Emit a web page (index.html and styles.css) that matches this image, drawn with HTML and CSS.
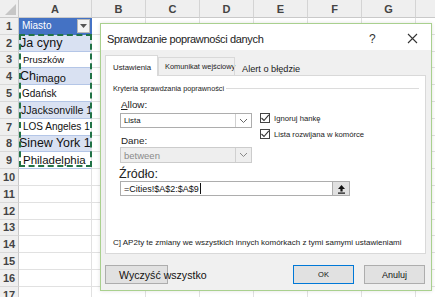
FILE: index.html
```html
<!DOCTYPE html>
<html lang="pl">
<head>
    <meta charset="UTF-8">
    <meta name="viewport" content="width=device-width, initial-scale=1.0">
    <title>Sprawdzanie poprawności danych</title>
    <link rel="stylesheet" href="styles.css">
</head>
<body>
    <div class="sheet" id="sheet">
        <div class="corner"><span class="corner-tri"></span></div>
        <div class="col-head">A</div>
        <div class="col-head">B</div>
        <div class="col-head">C</div>
        <div class="col-head">D</div>
        <div class="col-head">E</div>
        <div class="col-head">F</div>
        <div class="col-head">G</div>
        <div class="col-head"></div>
        <div class="copy-range"></div>
    </div>

    <div class="dialog">
        <div class="titlebar">
            <span class="title">Sprawdzanie poprawności danych</span>
            <span class="help">?</span>
            <svg class="close" width="11" height="11" viewBox="0 0 11 11">
                <path d="M1 1 L10 10 M10 1 L1 10" stroke="#333" stroke-width="1.1" fill="none"/>
            </svg>
        </div>
        <div class="dlg-body">
            <div class="tabs">
                <div class="tab tab-active">Ustawienia</div>
                <div class="tab">Komunikat wejściowy</div>
                <div class="tab tab-alert">Alert o błędzie</div>
            </div>
            <div class="panel">
                <div class="group-title"><span>Kryteria sprawdzania poprawności</span><span class="rule"></span></div>
                <div class="criteria">
                    <div class="fields">
                        <div class="lbl"><u>A</u>llow:</div>
                        <div class="select">
                            <span class="select-text">Lista</span>
                            <span class="drop"><svg width="9" height="6" viewBox="0 0 9 6"><path d="M1 1 L4.5 4.5 L8 1" stroke="#666" stroke-width="1" fill="none"/></svg></span>
                        </div>
                        <div class="lbl lbl-gap">Dane:</div>
                        <div class="select select-off">
                            <span class="select-text">between</span>
                            <span class="drop"><svg width="9" height="6" viewBox="0 0 9 6"><path d="M1 1 L4.5 4.5 L8 1" stroke="#888" stroke-width="1" fill="none"/></svg></span>
                        </div>
                    </div>
                    <div class="checks">
                        <div class="check">
                            <span class="box"><svg width="10" height="10" viewBox="0 0 10 10"><path d="M1.5 5 L4 7.5 L8.8 1.8" stroke="#333" stroke-width="1.1" fill="none"/></svg></span>
                            <span>Ignoruj hankę</span>
                        </div>
                        <div class="check">
                            <span class="box"><svg width="10" height="10" viewBox="0 0 10 10"><path d="M1.5 5 L4 7.5 L8.8 1.8" stroke="#333" stroke-width="1.1" fill="none"/></svg></span>
                            <span>Lista rozwijana w komórce</span>
                        </div>
                    </div>
                </div>
                <div class="lbl lbl-big">Źródło:</div>
                <div class="source">
                    <div class="src-input">=Cities!$A$2:$A$9<span class="caret"></span></div>
                    <div class="collapse">
                        <svg width="9" height="10" viewBox="0 0 9 10"><path d="M4.5 1 L8 5 L5.6 5 L5.6 7.5 L3.4 7.5 L3.4 5 L1 5 Z" fill="#111"/><rect x="1" y="8.5" width="7" height="1.2" fill="#111"/></svg>
                    </div>
                </div>
                <div class="apply">C] AP2ty te zmiany we wszystkich innych komórkach z tymi samymi ustawieniami</div>
            </div>
            <div class="buttons">
                <div class="btn btn-clear">Wyczyść wszystko</div>
                <div class="btn btn-ok">OK</div>
                <div class="btn btn-cancel">Anuluj</div>
            </div>
        </div>
    </div>

    <script>
        // wiersze arkusza: numer, kolumna A, reszta pustych komórek
        const cities = [
            '<span class="hdr-text">Miasto</span><span class="filter"><svg width="7" height="4" viewBox="0 0 7 4"><path d="M0 0 L7 0 L3.5 4 Z" fill="#555"/></svg></span>',
            '<span class="t-big">Ja cyny</span>',
            '<span class="t-sm">Pruszków</span>',
            '<span class="t-big">Ch</span><span class="t-hl">imago</span>',
            '<span class="t-gd">Gdańsk</span>',
            '<span class="t-jx">JJacksonville 1</span>',
            '<span class="t-la">LOS Angeles 1</span>',
            '<span class="t-ny">Sinew York 1</span>',
            '<span class="t-ph">Philadelphia</span>'
        ];

        const sheet = document.getElementById("sheet");
        for (let r = 1; r <= 17; r++) {
            const row = r + 1; // linia siatki (pierwsza to nagłówek kolumn)

            const num = document.createElement("div");
            num.className = "row-num";
            num.innerText = r;
            num.style.gridRow = row;
            sheet.appendChild(num);

            const a = document.createElement("div");
            a.className = "cell cell-a";
            if (r === 1) a.classList.add("cell-head");
            else if (r <= 9 && r % 2 === 0) a.classList.add("band");
            else if (r <= 9) a.classList.add("plain");
            a.innerHTML = cities[r - 1] || "";
            a.style.gridRow = row;
            sheet.appendChild(a);

            for (let c = 0; c < 7; c++) {
                const cell = document.createElement("div");
                cell.className = "cell";
                cell.style.gridRow = row;
                sheet.appendChild(cell);
            }
        }
    </script>
</body>
</html>
```

FILE: styles.css
```css
body {
    margin: 0;
    width: 435px;
    height: 297px;
    overflow: hidden;
    position: relative;
    background: #fff;
    font-family: "Liberation Sans", Arial, sans-serif;
    color: #111;
}

/* arkusz */
.sheet {
    width: 435px;
    height: 297px;
    overflow: hidden;
    display: grid;
    grid-template-columns: 19px 73px repeat(7, 54px);
    grid-template-rows: 18px;
    grid-auto-rows: 16.8px;
}

.corner {
    background: #efefef;
    border-right: 1px solid #c9c9c9;
    border-bottom: 1px solid #c9c9c9;
    box-sizing: border-box;
    display: flex;
    align-items: flex-end;
    justify-content: flex-end;
    padding: 0 2px 2px 0;
}

.corner-tri {
    width: 0;
    height: 0;
    border-left: 11px solid transparent;
    border-bottom: 11px solid #c6c6c6;
}

.col-head {
    background: #efefef;
    border-right: 1px solid #d4d4d4;
    border-bottom: 1px solid #c9c9c9;
    box-sizing: border-box;
    display: flex;
    align-items: center;
    justify-content: center;
    font-size: 11px;
    font-weight: bold;
    color: #444;
}

.row-num {
    grid-column: 1;
    background: #efefef;
    border-right: 1px solid #c9c9c9;
    border-bottom: 1px solid #d9d9d9;
    box-sizing: border-box;
    display: flex;
    align-items: center;
    justify-content: center;
    font-size: 11px;
    font-weight: bold;
    color: #444;
}

.cell {
    border-right: 1px solid #e1e1e1;
    border-bottom: 1px solid #e1e1e1;
    box-sizing: border-box;
    white-space: nowrap;
    display: flex;
    align-items: center;
    min-width: 0;
}

.cell-a {
    grid-column: 2;
    overflow: visible;
}

.cell-head {
    background: #4472c4;
    border-color: #4472c4;
    color: #fff;
    font-size: 10px;
    padding-left: 3px;
}

.band {
    background: #d9e1f2;
    border-bottom-color: #b4c6e7;
}

.plain {
    border-bottom-color: #b4c6e7;
}

.filter {
    margin-left: auto;
    margin-right: 1px;
    width: 13px;
    height: 14px;
    box-sizing: border-box;
    background: #f3f3f3;
    border: 1px solid #b7b7b7;
    display: flex;
    align-items: center;
    justify-content: center;
}

/* teksty miast mają różne rozmiary */
.t-big { font-size: 12.5px; margin-left: 1px; }
.t-sm { font-size: 9.5px; margin-left: 4px; }
.t-gd { font-size: 10px; margin-left: 3px; }
.t-jx { font-size: 10.6px; margin-left: 2px; }
.t-la { font-size: 10px; margin-left: 4px; }
.t-ny { font-size: 12.4px; margin-left: 0; }
.t-ph { font-size: 11.5px; margin-left: 4px; }
.t-hl {
    font-size: 11px;
    background: #d9e1f2;
    padding-top: 4px;
    align-self: flex-end;
}

.copy-range {
    grid-column: 2;
    grid-row: 3 / 11;
    border: 2px dashed #217346;
    margin: -1px 0 2px 0;
    z-index: 1;
}

/* okno dialogowe */
.dialog {
    position: absolute;
    left: 100px;
    top: 23px;
    width: 332px;
    height: 268px;
    box-sizing: border-box;
    border: 1px solid #a9d08e;
    background: #f0f0f0;
    box-shadow: 0 0 4px rgba(0, 0, 0, 0.12);
    display: flex;
    flex-direction: column;
    z-index: 5;
}

.titlebar {
    height: 26px;
    background: #fff;
    display: flex;
    align-items: center;
    padding: 3px 0 0 6px;
    box-sizing: border-box;
}

.title {
    font-size: 11px;
    letter-spacing: -0.35px;
    color: #222;
}

.help {
    margin-left: auto;
    font-size: 12px;
    color: #333;
    width: 10px;
}

.close {
    margin: 0 13px 0 28px;
}

.dlg-body {
    padding: 5px 5px 5px 4px;
}

.tabs {
    display: flex;
    align-items: flex-end;
    height: 20px;
}

.tab {
    height: 18px;
    box-sizing: border-box;
    border: 1px solid #d9d9d9;
    border-bottom: none;
    font-size: 7.4px;
    color: #222;
    display: flex;
    align-items: center;
    padding: 0 6px;
    width: 77px;
    white-space: nowrap;
}

.tab-active {
    height: 21px;
    width: 53px;
    margin-bottom: -1px;
    background: #fff;
    position: relative;
    z-index: 1;
    font-size: 7.8px;
    padding-left: 7px;
    padding-top: 3px;
}

.tab-alert {
    border: none;
    border-left: 1px solid #d9d9d9;
    font-size: 9.2px;
    width: auto;
    padding: 6px 0 0 7px;
    margin-left: -1px;
}

.panel {
    height: 179px;
    box-sizing: border-box;
    background: #fff;
    border: 1px solid #d9d9d9;
    display: flex;
    flex-direction: column;
    padding: 0 6px 0 0;
}

.group-title {
    display: flex;
    align-items: center;
    font-size: 7.3px;
    line-height: 11px;
    margin-top: 6.5px;
    padding-left: 7px;
    color: #222;
}

.rule {
    flex: 1;
    height: 1px;
    background: #dcdcdc;
    margin-left: 2px;
}

.criteria {
    display: flex;
    margin: 4.5px 0 0 14px;
}

.fields {
    width: 132px;
    display: flex;
    flex-direction: column;
}

.lbl {
    font-size: 9.8px;
    line-height: 13px;
    height: 13px;
    margin-left: 1px;
    color: #222;
}

.lbl-gap {
    margin-top: 6px;
}

.lbl-big {
    font-size: 12.5px;
    line-height: 14px;
    height: 14px;
    margin: 4px 0 0 13px;
}

.select {
    margin-top: 2px;
    height: 15px;
    box-sizing: border-box;
    border: 1px solid #adadad;
    background: #fff;
    display: flex;
}

.select-off {
    margin-top: 0;
    height: 16px;
    background: #eeeeee;
    border-color: #cccccc;
}

.select-text {
    flex: 1;
    font-size: 7.8px;
    display: flex;
    align-items: center;
    padding-left: 3px;
}

.select-off .select-text {
    font-size: 9.5px;
    color: #8a8a8a;
}

.drop {
    width: 15px;
    border-left: 1px solid #d0d0d0;
    display: flex;
    align-items: center;
    justify-content: center;
}

.checks {
    margin-left: 8px;
    padding-top: 15px;
    display: flex;
    flex-direction: column;
    gap: 6px;
}

.check {
    display: flex;
    align-items: center;
    height: 10px;
    font-size: 7.7px;
    color: #222;
    white-space: nowrap;
}

.box {
    width: 10px;
    height: 10px;
    box-sizing: border-box;
    border: 1px solid #444;
    display: flex;
    margin-right: 4px;
}

.box svg {
    margin: -1px;
}

.source {
    display: flex;
    margin-left: 14px;
    height: 15px;
}

.src-input {
    width: 213px;
    box-sizing: border-box;
    border: 1px solid #adadad;
    font-size: 9px;
    display: flex;
    align-items: center;
    padding-left: 3px;
    color: #111;
}

.caret {
    width: 1px;
    height: 11px;
    background: #111;
    margin-left: 1px;
}

.collapse {
    width: 17px;
    box-sizing: border-box;
    border: 1px solid #adadad;
    border-left: none;
    background: #e1e1e1;
    display: flex;
    align-items: center;
    justify-content: center;
}

.apply {
    font-size: 8px;
    line-height: 11px;
    margin-top: 40.5px;
    padding-left: 7px;
    white-space: nowrap;
    color: #222;
}

.buttons {
    display: flex;
    margin-top: 11px;
    height: 19px;
}

.btn {
    width: 61px;
    box-sizing: border-box;
    border: 1px solid #adadad;
    background: #e1e1e1;
    font-size: 9px;
    display: flex;
    align-items: center;
    justify-content: center;
    color: #111;
}

.btn-clear {
    width: 63px;
    justify-content: flex-start;
    padding-left: 13px;
    font-size: 10.6px;
    white-space: nowrap;
    overflow: visible;
}

.btn-ok {
    margin-left: auto;
    border-color: #0078d7;
    font-size: 7.5px;
}

.btn-cancel {
    margin-left: 10px;
    margin-right: 1px;
}
```
